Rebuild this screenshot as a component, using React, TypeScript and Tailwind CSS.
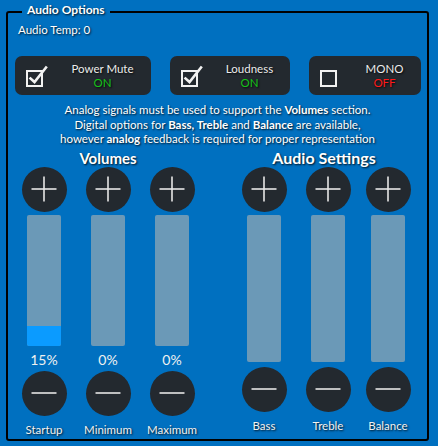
import React from 'react';

const shadow = '[text-shadow:1px_1px_2px_rgba(0,0,0,0.85)]';

function CheckIcon({ checked }: { checked: boolean }) {
  return (
    <svg width="22" height="22" viewBox="0 0 22 22" className="shrink-0">
      <rect x="1" y="6" width="15" height="15" fill="none" stroke="#f2f2f2" strokeWidth="2" />
      {checked && (
        <path d="M4.5 13.5 L8.5 17 L20 2.5" fill="none" stroke="#f2f2f2" strokeWidth="2.6" strokeLinecap="square" />
      )}
    </svg>
  );
}

function ToggleButton({
  label,
  on,
  width,
}: {
  label: string;
  on: boolean;
  width: string;
}) {
  return (
    <div className={`flex h-[39px] items-center rounded-[7px] bg-[#23292f] pl-[11px] ${width}`}>
      <CheckIcon checked={on} />
      <div className={`flex flex-1 flex-col items-center pl-[6px] text-[11.5px] leading-[14px] ${shadow}`}>
        <span className="text-[#ececec]">{label}</span>
        <span className={on ? 'text-[#16c21a]' : 'text-[#ff1a1a]'}>{on ? 'ON' : 'OFF'}</span>
      </div>
    </div>
  );
}

function RoundButton({ plus }: { plus?: boolean }) {
  return (
    <div className="flex h-[45px] w-[45px] items-center justify-center rounded-full bg-[#23292f]">
      <svg width="26" height="26" viewBox="0 0 26 26">
        <line x1="0.5" y1="13" x2="25.5" y2="13" stroke="#e6e6e6" strokeWidth="1.6" />
        {plus && <line x1="13" y1="0.5" x2="13" y2="25.5" stroke="#e6e6e6" strokeWidth="1.6" />}
      </svg>
    </div>
  );
}

function Level({
  label,
  pct,
  width,
  barHeight,
  showValue,
}: {
  label: string;
  pct: number;
  width: string;
  barHeight: string;
  showValue: boolean;
}) {
  return (
    <div className={`flex flex-col items-center ${width}`}>
      <RoundButton plus />
      <div className={`mt-[3px] flex w-[34px] flex-col justify-end overflow-hidden rounded-[2px] bg-[#6b99b7] ${barHeight}`}>
        <div className="w-full bg-[#0b9bff]" style={{ height: `${pct}%` }} />
      </div>
      {showValue ? (
        <div className="flex h-[25px] items-center pt-[2px] text-[14px] text-[#f0f0f0]">{pct}%</div>
      ) : (
        <div className="h-[5px]" />
      )}
      <RoundButton />
      <div className={`mt-[7px] text-[11.5px] leading-[14px] text-[#f2f2f2] ${shadow}`}>{label}</div>
    </div>
  );
}

export default function App() {
  return (
    <div className="h-[446px] w-[438px] bg-[#0070c0] pl-[6px] pt-[11px] font-['Lato','Open_Sans',sans-serif] text-white">
      <div className="relative h-[430px] w-[423px] rounded-[3px] border-2 border-black">
        <div className={`absolute left-[14px] top-[-11px] bg-[#0070c0] px-[5px] text-[12px] font-bold leading-[16px] ${shadow}`}>
          Audio Options
        </div>

        <div className={`pl-[10px] pt-[10px] text-[11.5px] leading-[14px] ${shadow}`}>Audio Temp: 0</div>

        <div className="mt-[19px] flex gap-[19px] pl-[7px]">
          <ToggleButton label="Power Mute" on width="w-[136px]" />
          <ToggleButton label="Loudness" on width="w-[120px]" />
          <ToggleButton label="MONO" on={false} width="w-[112px]" />
        </div>

        <p className={`mt-[8px] text-center text-[11.5px] leading-[14.5px] ${shadow}`}>
          Analog signals must be used to support the <b>Volumes</b> section.
          <br />
          Digital options for <b>Bass, Treble</b> and <b>Balance</b> are available,
          <br />
          however <b>analog</b> feedback is required for proper representation
        </p>

        <div className="mt-[2px] flex">
          <div className="ml-[4px] flex flex-col items-center">
            <h2 className={`text-[15px] font-bold leading-[18px] ${shadow}`}>Volumes</h2>
            <div className="flex">
              <Level label="Startup" pct={15} width="w-[64px]" barHeight="h-[131px]" showValue />
              <Level label="Minimum" pct={0} width="w-[64px]" barHeight="h-[131px]" showValue />
              <Level label="Maximum" pct={0} width="w-[64px]" barHeight="h-[131px]" showValue />
            </div>
          </div>
          <div className="ml-[28px] flex flex-col items-center">
            <h2 className={`text-[16px] font-bold leading-[18px] ${shadow}`}>Audio Settings</h2>
            <div className="flex">
              <Level label="Bass" pct={0} width="w-[64px]" barHeight="h-[147px]" showValue={false} />
              <Level label="Treble" pct={0} width="w-[64px]" barHeight="h-[147px]" showValue={false} />
              <Level label="Balance" pct={0} width="w-[56px]" barHeight="h-[147px]" showValue={false} />
            </div>
          </div>
        </div>
      </div>
    </div>
  );
}
